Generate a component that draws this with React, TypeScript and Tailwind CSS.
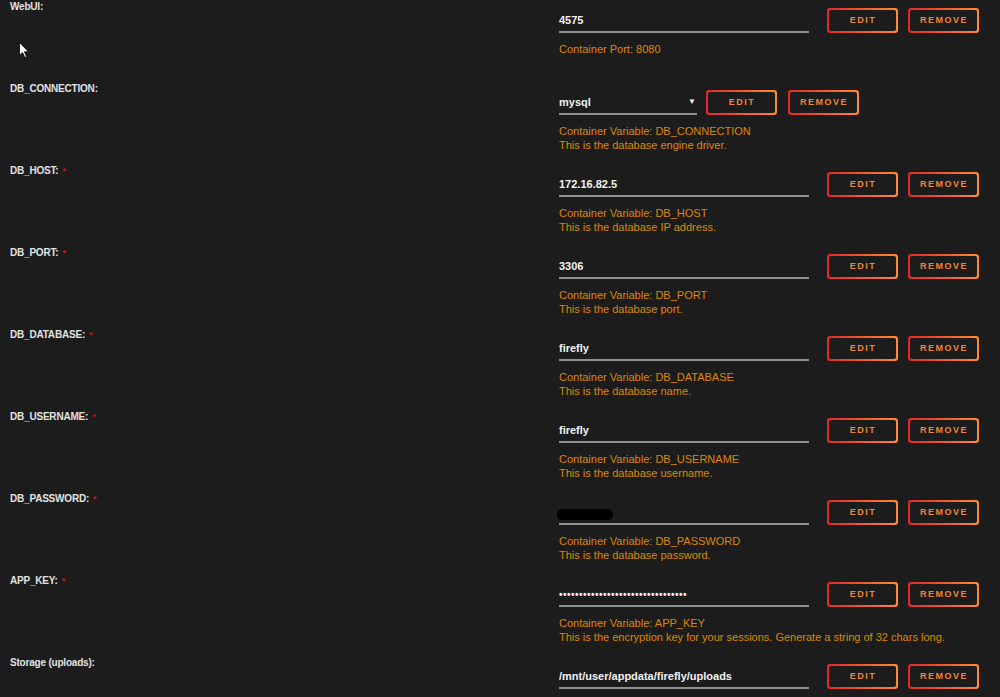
import React from "react";

type Row = {
  label: string;
  required?: boolean;
  value: React.ReactNode;
  select?: boolean;
  help: string[];
};

const font = { fontFamily: '"Liberation Sans", Arial, sans-serif' };

function Btn({ text, className = "" }: { text: string; className?: string }) {
  return (
    <div
      className={`w-[71px] h-[25px] rounded-[3px] p-[2px] bg-[linear-gradient(90deg,#e22828,#ff8c2f)] shrink-0 ${className}`}
    >
      <div className="w-full h-full rounded-[2px] bg-[#1c1c1c] flex items-center justify-center text-[9px] font-bold tracking-[1.5px] text-[#ee8630] pl-[1px]">
        {text}
      </div>
    </div>
  );
}

const rows: Row[] = [
  { label: "WebUI:", value: "4575", help: ["Container Port: 8080"] },
  {
    label: "DB_CONNECTION:",
    value: "mysql",
    select: true,
    help: ["Container Variable: DB_CONNECTION", "This is the database engine driver."],
  },
  {
    label: "DB_HOST:",
    required: true,
    value: "172.16.82.5",
    help: ["Container Variable: DB_HOST", "This is the database IP address."],
  },
  {
    label: "DB_PORT:",
    required: true,
    value: "3306",
    help: ["Container Variable: DB_PORT", "This is the database port."],
  },
  {
    label: "DB_DATABASE:",
    required: true,
    value: "firefly",
    help: ["Container Variable: DB_DATABASE", "This is the database name."],
  },
  {
    label: "DB_USERNAME:",
    required: true,
    value: "firefly",
    help: ["Container Variable: DB_USERNAME", "This is the database username."],
  },
  {
    label: "DB_PASSWORD:",
    required: true,
    value: <div className="ml-[-2px] mt-[3px] w-[56px] h-[11px] rounded-[5px] bg-black" />,
    help: ["Container Variable: DB_PASSWORD", "This is the database password."],
  },
  {
    label: "APP_KEY:",
    required: true,
    value: (
      <span className="text-[10px] tracking-[0.5px] font-bold">{"•".repeat(32)}</span>
    ),
    help: [
      "Container Variable: APP_KEY",
      "This is the encryption key for your sessions. Generate a string of 32 chars long.",
    ],
  },
  { label: "Storage (uploads):", value: "/mnt/user/appdata/firefly/uploads", help: [] },
];

export default function App() {
  return (
    <div className="relative w-[1000px] h-[697px] overflow-hidden bg-[#1c1c1c]" style={font}>
      {rows.map((r, i) => (
        <div key={i} className="flex h-[82px]">
          <div className="w-[559px] pl-[10px] pt-[1px] text-[10px] leading-[12px] font-bold tracking-[-0.2px] text-[#e2e2e2] shrink-0">
            {r.label}
            {r.required && <span className="text-[#cc1111] ml-[4px] text-[9px] align-top">*</span>}
          </div>
          <div className="flex flex-col pt-[8px]">
            <div className="flex items-start">
              {r.select ? (
                <>
                  <div className="w-[138px] h-[25px] border-b-2 border-[#8f8f8f] flex items-center justify-between text-[11px] font-bold text-[#f2f2f2] pt-[1px]">
                    <span>mysql</span>
                    <span className="text-[8px] mr-[1px]">▼</span>
                  </div>
                  <Btn text="EDIT" className="ml-[9px]" />
                  <Btn text="REMOVE" className="ml-[11px]" />
                </>
              ) : (
                <>
                  <div className="w-[250px] h-[25px] border-b-2 border-[#8f8f8f] flex items-center text-[11px] font-bold text-[#f2f2f2] pt-[2px]">
                    {r.value}
                  </div>
                  <Btn text="EDIT" className="ml-[18px]" />
                  <Btn text="REMOVE" className="ml-[10px]" />
                </>
              )}
            </div>
            <div className="mt-[9px] text-[11px] leading-[14px] text-[#dc8800]">
              {r.help.map((h, j) => (
                <div key={j}>{h}</div>
              ))}
            </div>
          </div>
        </div>
      ))}
      <svg className="absolute left-[19px] top-[42px]" width="11" height="17" viewBox="0 0 11 17">
        <path d="M0.5 0.5 L0.5 13.5 L3.5 10.5 L5.8 15.5 L7.6 14.7 L5.4 9.8 L9.5 9.8 Z" fill="#fff" stroke="#000" strokeWidth="0.8" />
      </svg>
    </div>
  );
}
